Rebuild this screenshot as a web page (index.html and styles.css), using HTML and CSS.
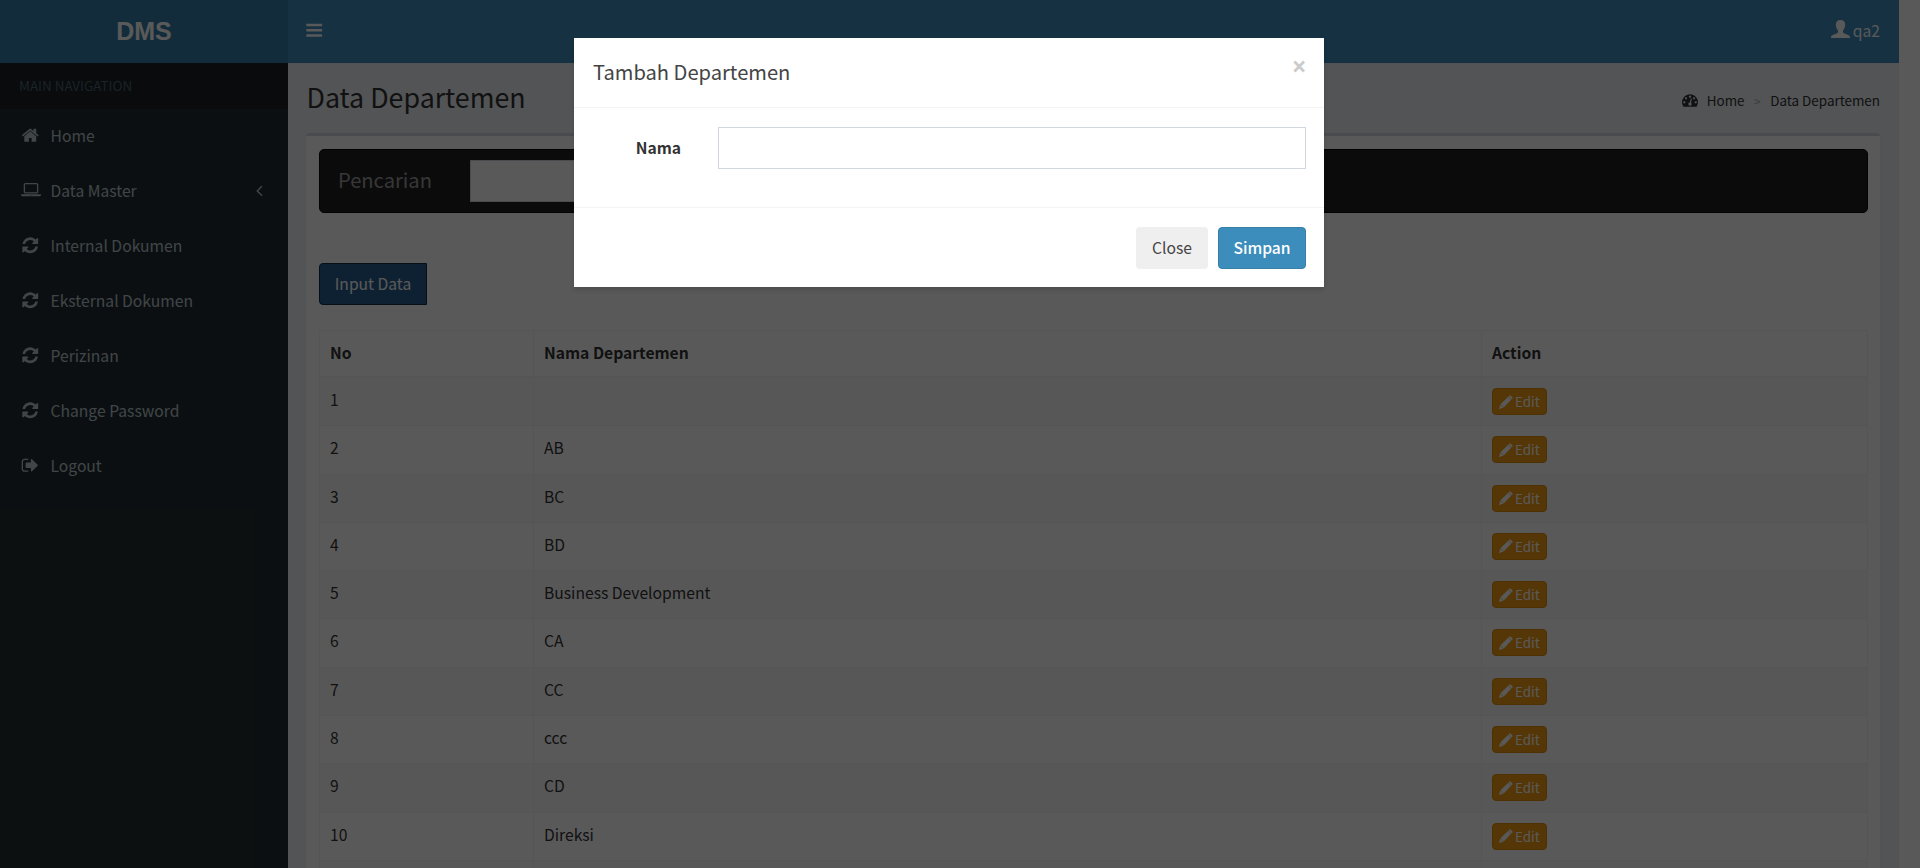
FILE: index.html
```html
<!DOCTYPE html>
<html lang="id">
<head>
<meta charset="utf-8">
<title>Data Departemen</title>
<link rel="stylesheet" href="styles.css">
</head>
<body>
<svg class="sprite" aria-hidden="true">
  <symbol id="bars" viewBox="0 0 1792 1792"><path d="M1664 1344v128q0 26-19 45t-45 19h-1408q-26 0-45-19t-19-45v-128q0-26 19-45t45-19h1408q26 0 45 19t19 45zm0-512v128q0 26-19 45t-45 19h-1408q-26 0-45-19t-19-45v-128q0-26 19-45t45-19h1408q26 0 45 19t19 45zm0-512v128q0 26-19 45t-45 19h-1408q-26 0-45-19t-19-45v-128q0-26 19-45t45-19h1408q26 0 45 19t19 45z"/></symbol>
  <symbol id="home" viewBox="0 0 1792 1792"><path d="M1472 992v480q0 26-19 45t-45 19h-384v-384h-256v384h-384q-26 0-45-19t-19-45v-480q0-1 .5-3t.5-3l575-474 575 474q1 2 1 6zm223-69l-62 74q-8 9-21 11h-3q-13 0-21-7l-692-577-692 577q-12 8-24 7-13-2-21-11l-62-74q-8-10-7-23.5t11-21.5l719-599q32-26 76-26t76 26l244 204v-195q0-14 9-23t23-9h192q14 0 23 9t9 23v408l219 182q10 8 11 21.5t-7 23.5z"/></symbol>
  <symbol id="laptop" viewBox="0 0 1920 1792"><path d="M416 1216q-66 0-113-47t-47-113v-704q0-66 47-113t113-47h1088q66 0 113 47t47 113v704q0 66-47 113t-113 47h-1088zm-32-864v704q0 13 9.5 22.500t22.500 9.500h1088q13 0 22.500-9.500t9.500-22.500v-704q0-13-9.500-22.500t-22.500-9.500h-1088q-13 0-22.500 9.500t-9.500 22.500zm1376 928h160v96q0 40-47 68t-113 28h-1600q-66 0-113-28t-47-68v-96h1760zm-720 96q16 0 16-16t-16-16h-160q-16 0-16 16t16 16h160z"/></symbol>
  <symbol id="refresh" viewBox="0 0 1792 1792"><path d="M1639 1056q0 5-1 7-64 268-268 434.500t-478 166.500q-146 0-282.500-55t-243.500-157l-129 129q-19 19-45 19t-45-19-19-45v-448q0-26 19-45t45-19h448q26 0 45 19t19 45-19 45l-137 137q71 66 161 102t187 36q134 0 250-65t186-179q11-17 53-117 8-23 30-23h192q13 0 22.500 9.500t9.500 22.500zm25-800v448q0 26-19 45t-45 19h-448q-26 0-45-19t-19-45 19-45l138-138q-148-137-349-137-134 0-250 65t-186 179q-11 17-53 117-8 23-30 23h-199q-13 0-22.500-9.500t-9.500-22.500v-7q65-268 270-434.500t480-166.500q146 0 284 55.500t245 156.500l130-129q19-19 45-19t45 19 19 45z"/></symbol>
  <symbol id="signout" viewBox="0 0 1792 1792"><path d="M704 1440q0 4 1 20t.5 26.500-3 23.500-10 19.500-20.500 6.500h-320q-119 0-203.500-84.500t-84.500-203.500v-704q0-119 84.500-203.500t203.500-84.500h320q13 0 22.500 9.500t9.500 22.500q0 4 1 20t.5 26.500-3 23.500-10 19.500-20.500 6.500h-320q-66 0-113 47t-47 113v704q0 66 47 113t113 47h312l11.500 1 11.500 3 8 5.500 7 9 2 13.500zm928-544q0 26-19 45l-544 544q-19 19-45 19t-45-19-19-45v-288h-448q-26 0-45-19t-19-45v-384q0-26 19-45t45-19h448v-288q0-26 19-45t45-19 45 19l544 544q19 19 19 45z"/></symbol>
  <symbol id="dashboard" viewBox="0 0 1792 1792"><path d="M384 1152q0-53-37.500-90.500t-90.500-37.500-90.500 37.500-37.500 90.500 37.500 90.500 90.500 37.500 90.500-37.500 37.500-90.500zm192-448q0-53-37.500-90.500t-90.500-37.500-90.500 37.500-37.500 90.500 37.500 90.500 90.500 37.500 90.500-37.500 37.500-90.500zm428 481l101-382q6-26-7.500-48.500t-38.500-29.500-48 6.500-30 39.500l-101 382q-60 5-107 43.500t-63 98.500q-20 77 20 146t117 89 146-20 89-117q16-60-6-117t-72-91zm660-33q0-53-37.500-90.500t-90.500-37.500-90.500 37.500-37.500 90.500 37.500 90.500 90.500 37.500 90.500-37.500 37.500-90.500zm-640-640q0-53-37.500-90.500t-90.500-37.500-90.500 37.500-37.500 90.500 37.500 90.500 90.500 37.500 90.500-37.500 37.500-90.500zm448 192q0-53-37.500-90.500t-90.500-37.500-90.500 37.500-37.500 90.500 37.500 90.500 90.500 37.500 90.500-37.500 37.500-90.500zm320 448q0 261-141 483-19 29-54 29h-1402q-35 0-54-29-141-221-141-483 0-182 71-348t191-286 286-191 348-71 348 71 286 191 191 286 71 348z"/></symbol>
  <symbol id="angle" viewBox="0 0 1792 1792"><path d="M1203 544q0 13-10 23l-393 393 393 393q10 10 10 23t-10 23l-50 50q-10 10-23 10t-23-10l-466-466q-10-10-10-23t10-23l466-466q10-10 23-10t23 10l50 50q10 10 10 23z"/></symbol>
  <symbol id="pencil" viewBox="0 0 14 14"><path d="M10.300.7Q11-.1 11.800.7L13.300 2.200Q14 3 13.300 3.700L12.500 4.500 9.500 1.500ZM9.200 1.800L12.200 4.800 4.700 12.500 1.500 9.300ZM1.200 9.600L4.400 12.800 0 14Z"/></symbol>
  <symbol id="user" viewBox="0 0 19 18"><path d="M9.500 0C12.500 0 14.200 1.700 14.200 4.600 14.200 7.200 13.300 9.200 12 10.400V12C12 12.600 12.400 13 13 13.300L17.200 15.100C18.500 15.700 19 16.400 19 18H0C0 16.400.5 15.700 1.800 15.100L6 13.300C6.600 13 7 12.600 7 12V10.400C5.700 9.200 4.800 7.200 4.800 4.600 4.800 1.700 6.500 0 9.500 0Z"/></symbol>
</svg>

<div class="wrapper">
  <header class="main-header">
    <a class="logo">DMS</a>
    <nav class="topbar">
      <svg class="fa"><use href="#bars"/></svg>
      <a class="user"><svg class="user-icon"><use href="#user"/></svg>qa2</a>
    </nav>
  </header>
  <div class="columns">
    <aside class="sidebar">
      <div class="section">MAIN NAVIGATION</div>
      <a class="item"><svg class="fa"><use href="#home"/></svg>Home</a>
      <a class="item"><svg class="fa wide"><use href="#laptop"/></svg>Data Master<svg class="fa arrow"><use href="#angle"/></svg></a>
      <a class="item"><svg class="fa"><use href="#refresh"/></svg>Internal Dokumen</a>
      <a class="item"><svg class="fa"><use href="#refresh"/></svg>Eksternal Dokumen</a>
      <a class="item"><svg class="fa"><use href="#refresh"/></svg>Perizinan</a>
      <a class="item"><svg class="fa"><use href="#refresh"/></svg>Change Password</a>
      <a class="item"><svg class="fa"><use href="#signout"/></svg>Logout</a>
    </aside>
    <main class="content">
      <div class="content-header">
        <h1>Data Departemen</h1>
        <div class="breadcrumb"><svg class="fa dash"><use href="#dashboard"/></svg><span>Home</span><span class="sep">&gt;</span><span>Data Departemen</span></div>
      </div>
      <section class="box">
        <div class="searchbar"><span class="brand">Pencarian</span><input class="field search" type="text"></div>
        <button class="btn input-data">Input Data</button>
        <table class="table">
          <thead><tr><th>No</th><th>Nama Departemen</th><th>Action</th></tr></thead>
          <tbody>
            <tr><td>1</td><td></td><td><a class="edit"><svg><use href="#pencil"/></svg>Edit</a></td></tr>
            <tr><td>2</td><td>AB</td><td><a class="edit"><svg><use href="#pencil"/></svg>Edit</a></td></tr>
            <tr><td>3</td><td>BC</td><td><a class="edit"><svg><use href="#pencil"/></svg>Edit</a></td></tr>
            <tr><td>4</td><td>BD</td><td><a class="edit"><svg><use href="#pencil"/></svg>Edit</a></td></tr>
            <tr><td>5</td><td>Business Development</td><td><a class="edit"><svg><use href="#pencil"/></svg>Edit</a></td></tr>
            <tr><td>6</td><td>CA</td><td><a class="edit"><svg><use href="#pencil"/></svg>Edit</a></td></tr>
            <tr><td>7</td><td>CC</td><td><a class="edit"><svg><use href="#pencil"/></svg>Edit</a></td></tr>
            <tr><td>8</td><td>ccc</td><td><a class="edit"><svg><use href="#pencil"/></svg>Edit</a></td></tr>
            <tr><td>9</td><td>CD</td><td><a class="edit"><svg><use href="#pencil"/></svg>Edit</a></td></tr>
            <tr><td>10</td><td>Direksi</td><td><a class="edit"><svg><use href="#pencil"/></svg>Edit</a></td></tr>
            <tr><td></td><td></td><td></td></tr>
          </tbody>
        </table>
      </section>
    </main>
  </div>
</div>

<div class="overlay">
  <div class="modal">
    <div class="modal-header"><h4>Tambah Departemen</h4><span class="close">×</span></div>
    <div class="modal-body"><label>Nama</label><input class="field" type="text"></div>
    <div class="modal-footer"><button class="btn default">Close</button><button class="btn primary">Simpan</button></div>
  </div>
</div>
</body>
</html>
```
FILE: styles.css
```css
* { box-sizing: border-box; }
body {
  margin: 0;
  height: 868px;
  overflow: hidden;
  background: #fff;
  color: #333;
  font: 15.67px/25px "Noto Sans CJK SC", "Open Sans", sans-serif;
}
h1, h4 { margin: 0; font-weight: 400; }
svg { fill: currentColor; flex: none; }
.sprite { display: none; }
.fa { width: 18.500px; height: 18.500px; }

.wrapper { width: 1899px; height: 868px; overflow: hidden; display: flex; flex-direction: column; }
.main-header { display: flex; height: 63px; flex: none; color: #fff; }
.logo {
  width: 288px;
  background: #367fa9;
  font: bold 25px/62px "Liberation Sans", Arial, sans-serif;
  text-align: center;
}
.topbar {
  flex: 1;
  display: flex;
  align-items: center;
  justify-content: space-between;
  padding: 0 19px 2px 17px;
  background: #3c8dbc;
}
.user { display: flex; align-items: center; gap: 3px; }
.user-icon { width: 19px; height: 18px; margin-bottom: 3px; }

.columns { flex: 1; display: flex; min-height: 0; }
.sidebar { width: 288px; background: #222d32; color: #b8c7ce; }
.section {
  height: 46px;
  padding: 10px 19px;
  background: #1a2226;
  color: #4b646f;
  font-size: 13.43px;
}
.item { display: flex; align-items: center; height: 55px; padding: 0 20px 2px 20.500px; }
.item .fa { margin-right: 11.500px; }
.item .wide { width: 20px; margin: 0 9.500px 0 .5px; }
.item .arrow { margin: 0 0 0 auto; }

.content { flex: 1; padding: 0 19px 0 18px; background: #ecf0f5; }
.content-header { display: flex; justify-content: space-between; height: 70px; }
.content-header h1 { font-size: 26.8px; line-height: 30px; padding: 19px 0 0 .5px; }
.breadcrumb { display: flex; align-items: center; padding-top: 4px; font-size: 13.43px; color: #333; }
.dash { width: 16px; height: 16px; margin-right: 9px; }
.sep { margin: 0 9.500px; color: #aaa; font-size: 12px; }

.box {
  height: 760px;
  padding: 13px 12px 0 13px;
  background: #fff;
  border-top: 3px solid #d2d6de;
  border-radius: 3.75px;
  box-shadow: 0 1px 1px rgba(0, 0, 0, .1);
}
.searchbar {
  display: flex;
  align-items: center;
  height: 64px;
  padding-left: 18px;
  background: #222;
  border: 1px solid #080808;
  border-radius: 5px;
}
.brand { width: 132px; padding-bottom: 4px; color: #9d9d9d; font-size: 20.14px; }
.field { height: 42px; padding: 0 15px; background: #fff; border: 1px solid #d2d6de; border-radius: 0; font: inherit; }
.search { width: 240px; }
.btn {
  height: 42px;
  padding: 0 15px 2px;
  border: 1px solid transparent;
  border-radius: 4px;
  color: #fff;
  font: inherit;
  line-height: 25px;
}
.input-data {
  display: block;
  width: 108px;
  margin: 50px 0 25px;
  padding: 0 0 2px;
  background: #286090;
  border-color: #122b40;
  border-radius: 4px 0 0 4px;
}

.table { display: block; border: 1px solid #f4f4f4; }
.table thead, .table tbody { display: block; }
.table tr { display: grid; grid-template-columns: 214px 948px 1fr; }
.table th, .table td { padding: 9px 10px 0; text-align: left; border-right: 1px solid #f4f4f4; }
.table tr > :last-child { border-right: 0; }
.table thead tr { height: 47px; border-bottom: 2px solid #f4f4f4; }
.table tbody tr { height: 48.3px; border-bottom: 1px solid #f4f4f4; }
.table tbody tr:nth-child(odd) { background: #f9f9f9; }
.edit {
  display: flex;
  align-items: center;
  gap: 2px;
  width: 55px;
  height: 27px;
  margin-top: 1px;
  padding-left: 6px;
  background: #f39c12;
  border: 1px solid #e08e0b;
  border-radius: 4px;
  color: #fff;
  font-size: 13.43px;
}
.edit svg { width: 14px; height: 14px; }

.overlay {
  position: absolute;
  inset: 0;
  padding-top: 38px;
  background: rgba(0, 0, 0, .65);
}
.modal {
  width: 750px;
  height: 249px;
  margin-left: 574px;
  background: #fff;
  box-shadow: 0 2.500px 4px rgba(0, 0, 0, .125);
}
.modal-header {
  display: flex;
  justify-content: space-between;
  height: 70px;
  padding: 18px 17.500px 0 19px;
  border-bottom: 1px solid #f4f4f4;
}
.modal-header h4 { color: #444; font-size: 20.14px; line-height: 31px; }
.close { font: 700 26px/26px "Open Sans", sans-serif; margin-top: -3px; color: #000; opacity: .2; }
.modal-body { display: flex; height: 99px; padding: 19px 18px 0 0; }
.modal-body label { width: 107px; margin-right: 37px; line-height: 42px; font-weight: 700; text-align: right; }
.modal-body .field { flex: 1; }
.modal-footer {
  display: flex;
  justify-content: flex-end;
  gap: 10px;
  padding: 19px 18px;
  border-top: 1px solid #f4f4f4;
}
.default { width: 72px; background: #efefef; color: #444; }
.primary { width: 88px; padding: 0 0 2px; background: #3c8dbc; border-color: #367fa9; font-weight: 500; }
```
